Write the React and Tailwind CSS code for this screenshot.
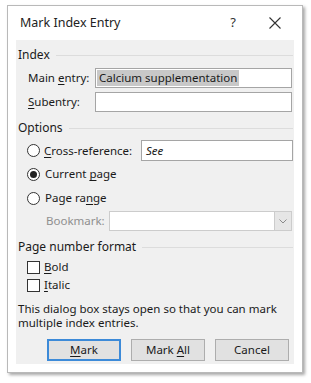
import React from "react";

const F = { fontFamily: '"Noto Sans", "Open Sans", sans-serif' };

function U({ children }) {
  return <span className="underline underline-offset-[2px] decoration-[1px]">{children}</span>;
}

function GroupHeader({ label, cls }) {
  return (
    <div className={`flex items-center h-[16px] pl-[2px] pr-[1px] ${cls || ""}`}>
      <span className="text-[12px] text-[#1a1a1a] leading-none">{label}</span>
      <div className="flex-1 h-px bg-[#dcdcdc] ml-[6px]" />
    </div>
  );
}

function Radio({ checked }) {
  return (
    <div className="w-[13px] h-[13px] rounded-full border border-[#333] bg-white flex items-center justify-center shrink-0">
      {checked && <div className="w-[7px] h-[7px] rounded-full bg-[#222]" />}
    </div>
  );
}

function Check() {
  return <div className="w-[13px] h-[13px] border border-[#333] bg-white shrink-0" />;
}

function Button({ children, primary }) {
  return (
    <div
      className={`w-[74px] h-[22px] flex items-center justify-center text-[11.5px] text-[#1a1a1a] bg-[#e1e1e1] ${
        primary ? "border-2 border-[#3c8ad8]" : "border border-[#adadad]"
      }`}
    >
      <span>{children}</span>
    </div>
  );
}

export default function App() {
  return (
    <div className="w-[311px] h-[383px] bg-white relative overflow-hidden" style={F}>
      <div className="absolute left-[7px] top-[5px] w-[296px] h-[368px] bg-white border border-[#b9b9b9] shadow-[2px_2px_3px_rgba(0,0,0,0.35)] flex flex-col">
        {/* title bar */}
        <div className="h-[34px] flex items-center shrink-0">
          <span className="ml-[12px] text-[12.5px] text-[#222]">Mark Index Entry</span>
          <span className="ml-auto mr-[33px] text-[13px] text-[#333]">?</span>
          <svg width="12" height="12" viewBox="0 0 12 12" className="mr-[21px]">
            <path d="M0.5 0.5 L11.5 11.5 M11.5 0.5 L0.5 11.5" stroke="#333" strokeWidth="1.1" />
          </svg>
        </div>
        {/* body */}
        <div className="mx-[8px] flex-1 mb-[8px] bg-[#f0f0f0] flex flex-col text-[11.5px] text-[#1a1a1a]">
          <GroupHeader label="Index" cls="mt-[7px]" />
          <div className="flex items-center h-[20px] mt-[5px]">
            <span className="ml-[12px] w-[67px]">
              Main <U>e</U>ntry:
            </span>
            <div className="w-[197px] h-[20px] border border-[#a5a5a5] bg-white flex items-center pl-[1px]">
              <span className="bg-[#c8c8c8] h-[16px] flex items-center px-[2px] text-[#1a1a1a]">
                Calcium supplementation
              </span>
            </div>
          </div>
          <div className="flex items-center h-[20px] mt-[4px]">
            <span className="ml-[12px] w-[67px]">
              <U>S</U>ubentry:
            </span>
            <div className="w-[197px] h-[20px] border border-[#a5a5a5] bg-white" />
          </div>
          <GroupHeader label="Options" cls="mt-[8px]" />
          <div className="flex items-center h-[21px] mt-[4px]">
            <div className="ml-[11px]">
              <Radio />
            </div>
            <span className="ml-[4px] w-[97px]">
              <U>C</U>ross-reference:
            </span>
            <div className="w-[152px] h-[21px] border border-[#a5a5a5] bg-white flex items-center pl-[4px] italic">
              See
            </div>
          </div>
          <div className="flex items-center h-[20px] mt-[3px]">
            <div className="ml-[11px]">
              <Radio checked />
            </div>
            <span className="ml-[5px]">
              Current <U>p</U>age
            </span>
          </div>
          <div className="flex items-center h-[20px] mt-[4px]">
            <div className="ml-[11px]">
              <Radio />
            </div>
            <span className="ml-[5px]">
              Page ra<U>n</U>ge
            </span>
          </div>
          <div className="flex items-center h-[20px] mt-[3px]">
            <span className="ml-[30px] w-[63px] text-[#8f8f8f]">Bookmark:</span>
            <div className="w-[183px] h-[20px] border border-[#cccccc] bg-white flex justify-end">
              <div className="w-[17px] h-full bg-[#e6e6e6] border-l border-[#cccccc] flex items-center justify-center">
                <svg width="8" height="5" viewBox="0 0 8 5">
                  <path d="M0.5 0.5 L4 4 L7.5 0.5" fill="none" stroke="#8a8a8a" strokeWidth="1" />
                </svg>
              </div>
            </div>
          </div>
          <GroupHeader label="Page number format" cls="mt-[8px]" />
          <div className="flex items-center h-[16px] mt-[4px]">
            <div className="ml-[11px]">
              <Check />
            </div>
            <span className="ml-[4px]">
              <U>B</U>old
            </span>
          </div>
          <div className="flex items-center h-[16px] mt-[2px]">
            <div className="ml-[11px]">
              <Check />
            </div>
            <span className="ml-[4px]">
              <U>I</U>talic
            </span>
          </div>
          <div className="ml-[2px] mt-[9px] leading-[14px]">
            <div>This dialog box stays open so that you can mark</div>
            <div>multiple index entries.</div>
          </div>
          <div className="flex mt-[9px] ml-[31px] gap-[10px]">
            <Button primary>
              <U>M</U>ark
            </Button>
            <Button>
              Mark <U>A</U>ll
            </Button>
            <Button>Cancel</Button>
          </div>
        </div>
      </div>
    </div>
  );
}
